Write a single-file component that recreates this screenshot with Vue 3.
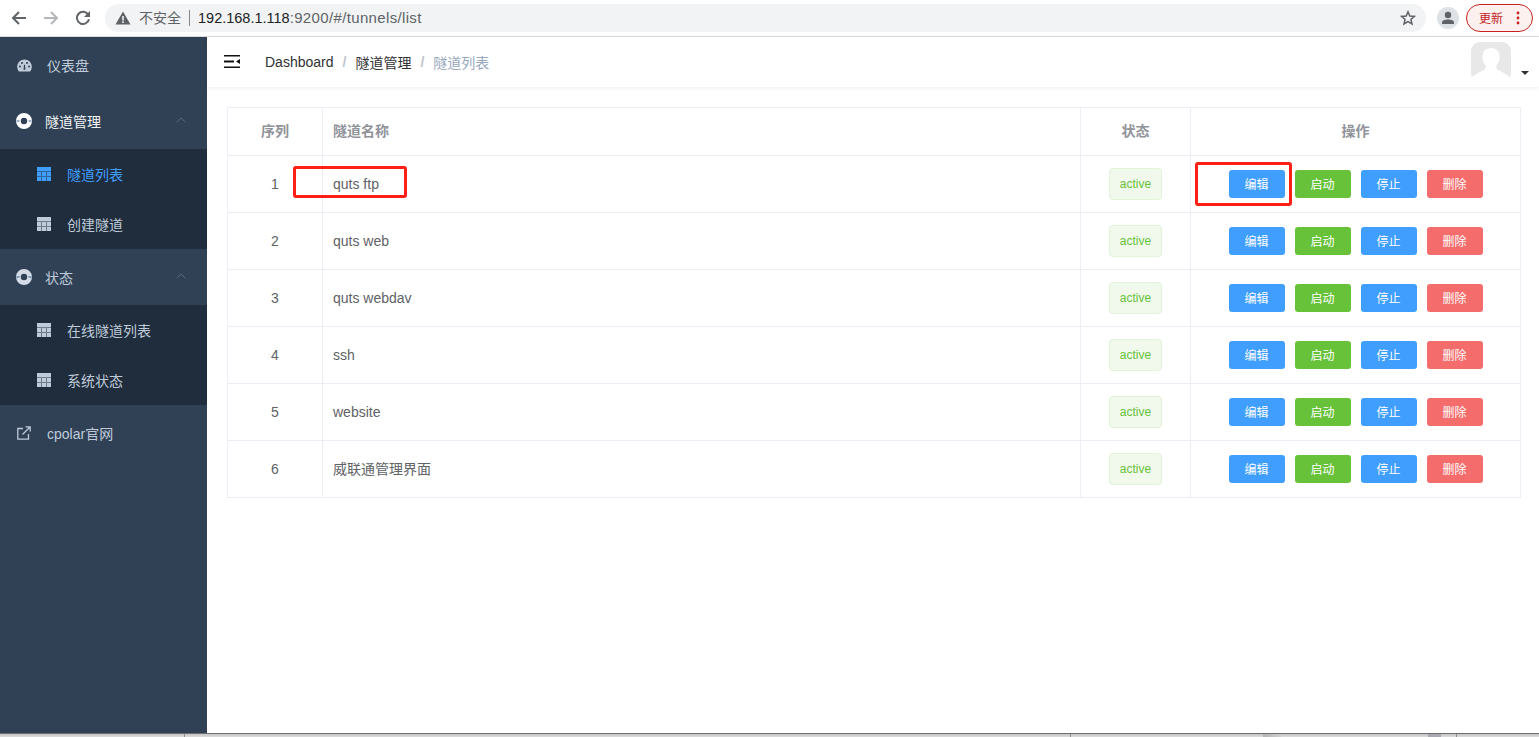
<script setup>
const rows = [
  { id: 1, name: 'quts ftp' },
  { id: 2, name: 'quts web' },
  { id: 3, name: 'quts webdav' },
  { id: 4, name: 'ssh' },
  { id: 5, name: 'website' },
  { id: 6, name: '威联通管理界面', cjk: true }
]
const actions = [
  { label: '编辑', cls: 'blue' },
  { label: '启动', cls: 'green' },
  { label: '停止', cls: 'blue' },
  { label: '删除', cls: 'red' }
]
</script>

<template>
  <div class="page">
    <header class="chrome">
      <svg class="nav-ic" width="16" height="16" viewBox="0 0 16 16"><path d="M15 8H2.500M8 2 2 8l6 6" fill="none" stroke="#5f6368" stroke-width="2"/></svg>
      <svg class="nav-ic fwd" width="16" height="16" viewBox="0 0 16 16"><path d="M1 8h12.500M8 2l6 6-6 6" fill="none" stroke="#b4b7bb" stroke-width="2"/></svg>
      <svg class="nav-ic rel" width="16" height="16" viewBox="0 0 16 16"><path d="M13.200 4.600A6.100 6.100 0 1 0 14 9.200" fill="none" stroke="#5f6368" stroke-width="2"/><path d="M15 1v6H9z" fill="#5f6368"/></svg>
      <div class="omnibox">
        <svg width="16" height="14" viewBox="0 0 16 14"><path d="M8 .5 15.500 13.500H.5z" fill="#5f6368"/><path d="M7.200 5h1.600v4.400H7.200zM7.200 10.300h1.600v1.600H7.200z" fill="#f1f3f4"/></svg>
        <span class="insecure">不安全</span>
        <i class="divider"></i>
        <span class="url"><b>192.168.1.118</b>:9200/#/tunnels/list</span>
        <svg class="star" width="16" height="16" viewBox="0 0 16 16"><path d="M8 1.800 9.800 6l4.600.4-3.500 3 1.100 4.500L8 11.500l-4 2.400 1.100-4.500-3.500-3L6.200 6z" fill="none" stroke="#5f6368" stroke-width="1.500"/></svg>
      </div>
      <div class="profile">
        <svg width="14" height="14" viewBox="0 0 14 14"><circle cx="7" cy="4" r="3.200" fill="#5f6368"/><path d="M1 13v-1.600C1 9.200 4.400 8.400 7 8.400s6 .8 6 3V13z" fill="#5f6368"/></svg>
      </div>
      <div class="update">
        <span>更新</span>
        <svg width="4" height="14" viewBox="0 0 4 14"><circle cx="2" cy="2" r="1.400" fill="#c5221f"/><circle cx="2" cy="7" r="1.400" fill="#c5221f"/><circle cx="2" cy="12" r="1.400" fill="#c5221f"/></svg>
      </div>
    </header>

    <div class="body">
      <aside class="sidebar">
        <div class="item">
          <svg class="ic" width="15" height="13" viewBox="0 0 15 13"><path fill-rule="evenodd" d="M7.500.5C3.400.5.2 3.700.2 7.800c0 1.800.6 3.400 1.700 4.700h11.200c1.100-1.300 1.700-2.900 1.700-4.700C14.800 3.700 11.600.5 7.500.5zM3 8.400a1 1 0 1 1 0-2 1 1 0 0 1 0 2zm2-3.300a1 1 0 1 1 0-2 1 1 0 0 1 0 2zm3.500 5.700H6.500l.5-5h1zm1.500-5.700a1 1 0 1 1 0-2 1 1 0 0 1 0 2zm2 3.300a1 1 0 1 1 0-2 1 1 0 0 1 0 2z" fill="#bfcbd9"/></svg>
          <span class="lbl">仪表盘</span>
        </div>

        <div class="item group open">
          <svg class="ic buoy" width="16" height="16" viewBox="0 0 16 16"><circle cx="8" cy="8" r="5.600" fill="none" stroke="#fff" stroke-width="4.800"/><path d="M.5 8h3M12.500 8h3" stroke="#9fb4cc" stroke-width="2"/></svg>
          <span class="lbl tight">隧道管理</span>
          <svg class="chev" width="10" height="6" viewBox="0 0 10 6"><path d="M.8 5 5 1l4.200 4" fill="none" stroke="#5a6b80" stroke-width="1"/></svg>
        </div>
        <div class="sub">
          <div class="sub-item active">
            <svg class="grid" width="14" height="14" viewBox="0 0 14 14"><path fill-rule="evenodd" d="M0 0h14v14H0zM0 4.600v.5h14v-.5zM4.400 5.100V14h.5V5.100zM9.100 5.100V14h.5V5.100zM0 9.400v.5h14v-.5z" fill="#409eff"/></svg>
            <span>隧道列表</span>
          </div>
          <div class="sub-item">
            <svg class="grid" width="14" height="14" viewBox="0 0 14 14"><path fill-rule="evenodd" d="M0 0h14v14H0zM0 4.600v.5h14v-.5zM4.400 5.100V14h.5V5.100zM9.100 5.100V14h.5V5.100zM0 9.400v.5h14v-.5z" fill="#bfcbd9"/></svg>
            <span>创建隧道</span>
          </div>
        </div>

        <div class="item group">
          <svg class="ic buoy" width="16" height="16" viewBox="0 0 16 16"><circle cx="8" cy="8" r="5.600" fill="none" stroke="#d3dce6" stroke-width="4.800"/><path d="M.5 8h3M12.500 8h3" stroke="#7f9ab8" stroke-width="2"/></svg>
          <span class="lbl tight">状态</span>
          <svg class="chev" width="10" height="6" viewBox="0 0 10 6"><path d="M.8 5 5 1l4.200 4" fill="none" stroke="#5a6b80" stroke-width="1"/></svg>
        </div>
        <div class="sub">
          <div class="sub-item">
            <svg class="grid" width="14" height="14" viewBox="0 0 14 14"><path fill-rule="evenodd" d="M0 0h14v14H0zM0 4.600v.5h14v-.5zM4.400 5.100V14h.5V5.100zM9.100 5.100V14h.5V5.100zM0 9.400v.5h14v-.5z" fill="#bfcbd9"/></svg>
            <span>在线隧道列表</span>
          </div>
          <div class="sub-item">
            <svg class="grid" width="14" height="14" viewBox="0 0 14 14"><path fill-rule="evenodd" d="M0 0h14v14H0zM0 4.600v.5h14v-.5zM4.400 5.100V14h.5V5.100zM9.100 5.100V14h.5V5.100zM0 9.400v.5h14v-.5z" fill="#bfcbd9"/></svg>
            <span>系统状态</span>
          </div>
        </div>

        <div class="item">
          <svg class="ic" width="14" height="14" viewBox="0 0 14 14"><path d="M6 2.500H.8v10.700h10.700V8" fill="none" stroke="#bfcbd9" stroke-width="1.300"/><path d="M5.500 8.500 12.500 1.500M8.500.8h4.700v4.700" fill="none" stroke="#bfcbd9" stroke-width="1.300"/></svg>
          <span class="lbl wide">cpolar官网</span>
        </div>
      </aside>

      <main class="main">
        <div class="navbar">
          <svg class="hamburger" width="16" height="13" viewBox="0 0 16 13"><path d="M0 .75h16M0 12.250h16" stroke="#111" stroke-width="1.500"/><path d="M0 6.500h10" stroke="#111" stroke-width="2"/><path d="M16 4v5l-4-2.500z" fill="#111"/></svg>
          <nav class="crumbs">
            <span class="c-a">Dashboard</span>
            <span class="sep">/</span>
            <span class="c-a">隧道管理</span>
            <span class="sep">/</span>
            <span class="c-b">隧道列表</span>
          </nav>
          <div class="avatar">
            <svg width="40" height="40" viewBox="0 0 40 40"><rect width="40" height="40" rx="9" fill="#e8e8e8"/><path d="M20 6c-6 0-9 4-8.600 10 .2 3 1.300 5.500 3.100 7.400.5 1.800.2 3.300-1.300 4.300C10 29.500 5 31.500 1 35v1l3 4h32l3-4v-1c-4-3.500-9-5.500-12.200-7.300-1.500-1-1.800-2.500-1.300-4.300 1.800-1.900 2.900-4.400 3.100-7.400C29 10 26 6 20 6z" fill="#fff"/></svg>
            <i class="caret"></i>
          </div>
        </div>

        <section class="content">
          <table class="tbl">
            <colgroup>
              <col class="c1" /><col /><col class="c3" /><col class="c4" />
            </colgroup>
            <thead>
              <tr>
                <th>序列</th>
                <th class="left">隧道名称</th>
                <th>状态</th>
                <th>操作</th>
              </tr>
            </thead>
            <tbody>
              <tr v-for="r in rows" :key="r.id">
                <td>{{ r.id }}</td>
                <td class="left" :class="{ cjk: r.cjk }">{{ r.name }}</td>
                <td><span class="tag">active</span></td>
                <td>
                  <div class="btns">
                    <button v-for="a in actions" :key="a.label" class="btn" :class="a.cls">{{ a.label }}</button>
                  </div>
                </td>
              </tr>
            </tbody>
          </table>
        </section>

        <div class="mark m1"></div>
        <div class="mark m2"></div>
      </main>
    </div>

    <footer class="strip"></footer>
  </div>
</template>

<style scoped>
.page {
  display: flex;
  flex-direction: column;
  height: 737px;
  overflow: hidden;
  font-family: "Liberation Sans", "Noto Sans CJK SC", sans-serif;
  background: #fff;
}
.chrome {
  flex: 0 0 37px;
  box-sizing: border-box;
  height: 37px;
  display: flex;
  align-items: center;
  border-bottom: 1px solid #dadce0;
  padding: 0 6px 1px 11px;
}
.nav-ic { flex: none; margin-right: 16px; }
.nav-ic.rel { margin-right: 14px; }
.omnibox {
  flex: 1;
  height: 28px;
  display: flex;
  align-items: center;
  background: #f1f3f4;
  border-radius: 14px;
  padding: 0 10px;
  min-width: 0;
}
.insecure { margin-left: 8px; padding-bottom: 2px; font-size: 14px; color: #5f6368; }
.divider { width: 1px; height: 16px; background: #80868b; margin: 0 8px; }
.url { font-size: 15px; letter-spacing: .35px; color: #5f6368; flex: 1; }
.url b { font-weight: 400; font-size: 14.5px; letter-spacing: 0; color: #202124; }
.star { flex: none; }
.profile {
  flex: none;
  width: 22px;
  height: 22px;
  margin-left: 11px;
  border-radius: 50%;
  background: #dee1e6;
  display: flex;
  align-items: center;
  justify-content: center;
}
.update {
  flex: none;
  box-sizing: border-box;
  width: 67px;
  height: 28px;
  margin-left: 7px;
  border: 1px solid #c5221f;
  border-radius: 14px;
  background: #fdf1f0;
  color: #c5221f;
  font-size: 12px;
  display: flex;
  align-items: center;
  justify-content: space-between;
  padding: 0 12px;
}
.body { flex: 1; display: flex; min-height: 0; }
.sidebar {
  flex: 0 0 207px;
  background: #304156;
  color: #bfcbd9;
  font-size: 14px;
}
.item {
  height: 56px;
  display: flex;
  align-items: center;
  padding-left: 17px;
  position: relative;
}
.ic { flex: none; }
.item .lbl { margin-left: 15px; }
.item .lbl.wide { margin-left: 16px; }
.buoy { margin-left: -1px; }
.item .lbl.tight { margin-left: 13px; }
.group.open { color: #f4f4f5; }
.chev { position: absolute; left: 176px; top: 24px; }
.sub { background: #1f2d3d; }
.sub-item {
  height: 50px;
  display: flex;
  align-items: center;
  padding-left: 37px;
}
.sub-item.active { color: #409eff; }
.grid { flex: none; margin-right: 16px; margin-top: -1px; }
.main { flex: 1; min-width: 0; position: relative; }
.navbar {
  height: 50px;
  display: flex;
  align-items: center;
  padding-left: 17px;
  box-shadow: 0 1px 4px rgba(0, 21, 41, 0.08);
  position: relative;
}
.hamburger { flex: none; margin-top: -2px; }
.crumbs {
  margin-left: 25px;
  font-size: 14px;
  display: flex;
  align-items: center;
  margin-top: -1px;
}
.c-a { color: #303133; }
.c-b { color: #97a8be; }
.sep { color: #c0c4cc; margin: 0 9px; font-weight: 700; }
.avatar { margin-left: auto; margin-right: 28px; position: relative; height: 40px; }
.avatar svg { display: block; }
.caret {
  position: absolute;
  left: 50px;
  top: 29px;
  width: 0;
  height: 0;
  border-left: 4px solid transparent;
  border-right: 4px solid transparent;
  border-top: 4px solid #303133;
}
.content { padding: 20px 18px 0 20px; }
.tbl {
  width: 100%;
  table-layout: fixed;
  border-collapse: collapse;
  font-size: 14px;
  color: #606266;
}
.c1 { width: 95px; }
.c3 { width: 110px; }
.c4 { width: 330px; }
.tbl th, .tbl td {
  border: 1px solid #ebeef5;
  padding: 0 10px;
  text-align: center;
  height: 57px;
  box-sizing: border-box;
}
.tbl th { height: 48px; padding-bottom: 4px; color: #909399; font-weight: 700; font-size: 14px; }
.tbl .left { text-align: left; }
.tbl td.cjk { padding-bottom: 2px; }
.tag {
  display: inline-block;
  box-sizing: border-box;
  width: 53px;
  height: 32px;
  line-height: 30px;
  font-size: 12px;
  color: #67c23a;
  background: #f0f9eb;
  border: 1px solid #e1f3d8;
  border-radius: 4px;
  vertical-align: middle;
}
.btns { display: flex; justify-content: center; gap: 10px; }
.btn {
  width: 56px;
  height: 28px;
  border: 0;
  border-radius: 3px;
  padding: 0 0 2px;
  color: #fff;
  font-size: 12px;
  font-family: inherit;
}
.blue { background: #409eff; }
.green { background: #67c23a; }
.red { background: #f56c6c; }
.mark {
  position: absolute;
  box-sizing: border-box;
  border: 3px solid #ff1f14;
  border-radius: 3px;
  pointer-events: none;
}
.m1 { left: 86px; top: 129px; width: 114px; height: 32px; }
.m2 { left: 988px; top: 125px; width: 97px; height: 44px; }
.strip {
  flex: 0 0 4px;
  height: 4px;
  box-sizing: border-box;
  border-top: 1px solid #6e6e6e;
  background:
    linear-gradient(#8f8f8f, #8f8f8f) 184px 0 / 1px 100% no-repeat,
    linear-gradient(#8f8f8f, #8f8f8f) 1070px 0 / 1px 100% no-repeat,
    linear-gradient(#a9a9b2, #a9a9b2) 1428px 0 / 13px 100% no-repeat,
    linear-gradient(#8f8f8f, #8f8f8f) 1456px 0 / 1px 100% no-repeat,
    linear-gradient(90deg, #b4b4b4, #cfcfcf) 1263px 0 / 18px 100% no-repeat,
    linear-gradient(#c4c4c4, #dcdcdc);
}
</style>
